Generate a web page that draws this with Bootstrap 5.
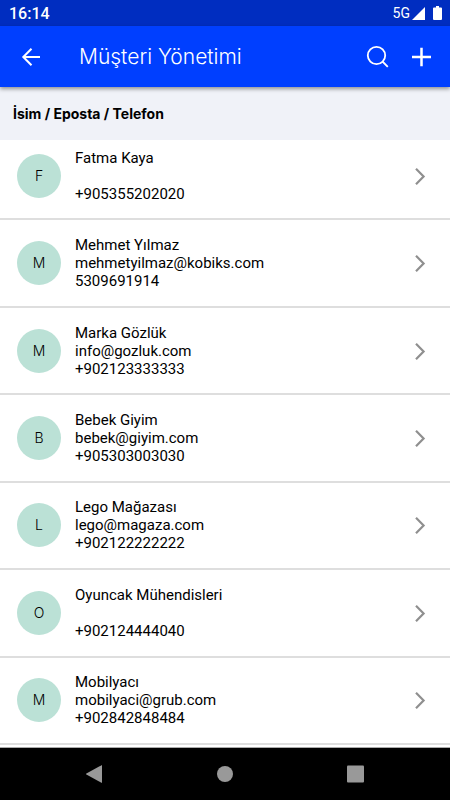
<!DOCTYPE html>
<html lang="tr">
<head>
<meta charset="utf-8">
<meta name="viewport" content="width=device-width, initial-scale=1">
<title>Müşteri Yönetimi</title>
<link rel="stylesheet" href="https://cdn.jsdelivr.net/npm/bootstrap@5.3.0/dist/css/bootstrap.min.css">
<style>
  body { font-family: Roboto, sans-serif; color: #000; }
  svg { display: block; flex: none; }
  .status-bar { background: #002dc0; padding: 0 8px 0 9px; height: 26px; font-size: 16px; line-height: 27px; }
  .status-time { font-weight: 500; }
  .status-network { font-size: 14px; margin-right: 2px; }
  .app-bar { background: #003fff; min-height: 61px; padding: 0 16px; box-shadow: 0 2px 4px rgba(0, 0, 0, .4); z-index: 1; }
  .app-title { font-family: Inter, sans-serif; font-size: 21px; line-height: 28px; font-weight: 300; margin-left: 33px; }
  .app-actions { gap: 20px; }
  .icon-btn { border: 0; padding: 0; background: none; color: #fff; }
  .filter-head { font-family: Inter, sans-serif; background: #f0f2f8; font-size: 14px; line-height: 20px; font-weight: 700; padding: 17px 13px 16px; margin: 0; }
  .customers { margin-bottom: 2px; }
  .customer { flex: 1 0 87px; gap: 14px; padding: 0 18px 0 17px; border-bottom: 2px solid #dedede; color: #000; font-size: 15px; line-height: 18px; }
  .customer:first-child { flex-basis: 80px; padding-bottom: 7px; }
  .avatar { width: 44px; height: 44px; background: #bbe1d6; font-family: Inter, sans-serif; font-size: 14px; font-weight: 300; }
  .details span { display: block; min-height: 18px; }
  .system-nav { background: #000; border-top: 1px solid #aaa; height: 53px; padding: 0 29px; }
</style>
<script src="https://cdn.jsdelivr.net/npm/bootstrap@5.3.0/dist/js/bootstrap.bundle.min.js"></script>
</head>
<body class="d-flex flex-column min-vh-100 bg-white">
  <div class="status-bar d-flex align-items-center justify-content-between text-white">
    <span class="status-time">16:14</span>
    <div class="d-flex align-items-center">
      <span class="status-network">5G</span>
      <svg width="13" height="13" viewBox="0 0 13 13" fill="#fff" aria-hidden="true"><path d="M13 0v13H0z"/></svg>
      <svg class="ms-2" width="9" height="14" viewBox="0 0 9 14" fill="#fff" aria-hidden="true"><path d="M3 0h3v1.500h2q1 0 1 1V13q0 1-1 1H1q-1 0-1-1V2.500q0-1 1-1h2z"/></svg>
    </div>
  </div>

  <header class="app-bar d-flex align-items-center text-white position-relative">
    <button class="icon-btn" type="button" aria-label="Geri">
      <svg width="30" height="30" viewBox="0 0 30 30" fill="none" stroke="currentColor" stroke-width="2"><path d="M24 15H7.500M15.500 6.800 7.300 15l8.200 8.200"/></svg>
    </button>
    <h1 class="app-title mb-0 me-auto">Müşteri Yönetimi</h1>
    <div class="app-actions d-flex">
      <button class="icon-btn" type="button" aria-label="Ara">
        <svg width="24" height="24" viewBox="0 0 24 24" fill="none" stroke="currentColor" stroke-width="1.800"><circle cx="10.500" cy="10.500" r="8.700"/><path d="m16.500 16.500 5.300 5.300"/></svg>
      </button>
      <button class="icon-btn" type="button" aria-label="Ekle">
        <svg width="24" height="24" viewBox="0 0 24 24" fill="none" stroke="currentColor" stroke-width="2.500"><path d="M11.500 2.700v18.500M2 12h19"/></svg>
      </button>
    </div>
  </header>

  <main class="d-flex flex-column flex-grow-1">
    <h2 class="filter-head">İsim / Eposta / Telefon</h2>
    <div class="customers d-flex flex-column flex-grow-1">
      <a href="#" class="customer d-flex align-items-center text-decoration-none">
        <span class="avatar rounded-circle d-flex align-items-center justify-content-center">F</span>
        <span class="details flex-grow-1"><span>Fatma Kaya</span><span></span><span>+905355202020</span></span>
        <svg width="24" height="24" viewBox="0 0 24 24" fill="none" stroke="#8f8f8f" stroke-width="2.200"><path d="m8 4.700 7.600 7.800L8 20.300"/></svg>
      </a>
      <a href="#" class="customer d-flex align-items-center text-decoration-none">
        <span class="avatar rounded-circle d-flex align-items-center justify-content-center">M</span>
        <span class="details flex-grow-1"><span>Mehmet Yılmaz</span><span>mehmetyilmaz@kobiks.com</span><span>5309691914</span></span>
        <svg width="24" height="24" viewBox="0 0 24 24" fill="none" stroke="#8f8f8f" stroke-width="2.200"><path d="m8 4.700 7.600 7.800L8 20.300"/></svg>
      </a>
      <a href="#" class="customer d-flex align-items-center text-decoration-none">
        <span class="avatar rounded-circle d-flex align-items-center justify-content-center">M</span>
        <span class="details flex-grow-1"><span>Marka Gözlük</span><span>info@gozluk.com</span><span>+902123333333</span></span>
        <svg width="24" height="24" viewBox="0 0 24 24" fill="none" stroke="#8f8f8f" stroke-width="2.200"><path d="m8 4.700 7.600 7.800L8 20.300"/></svg>
      </a>
      <a href="#" class="customer d-flex align-items-center text-decoration-none">
        <span class="avatar rounded-circle d-flex align-items-center justify-content-center">B</span>
        <span class="details flex-grow-1"><span>Bebek Giyim</span><span>bebek@giyim.com</span><span>+905303003030</span></span>
        <svg width="24" height="24" viewBox="0 0 24 24" fill="none" stroke="#8f8f8f" stroke-width="2.200"><path d="m8 4.700 7.600 7.800L8 20.300"/></svg>
      </a>
      <a href="#" class="customer d-flex align-items-center text-decoration-none">
        <span class="avatar rounded-circle d-flex align-items-center justify-content-center">L</span>
        <span class="details flex-grow-1"><span>Lego Mağazası</span><span>lego@magaza.com</span><span>+902122222222</span></span>
        <svg width="24" height="24" viewBox="0 0 24 24" fill="none" stroke="#8f8f8f" stroke-width="2.200"><path d="m8 4.700 7.600 7.800L8 20.300"/></svg>
      </a>
      <a href="#" class="customer d-flex align-items-center text-decoration-none">
        <span class="avatar rounded-circle d-flex align-items-center justify-content-center">O</span>
        <span class="details flex-grow-1"><span>Oyuncak Mühendisleri</span><span></span><span>+902124444040</span></span>
        <svg width="24" height="24" viewBox="0 0 24 24" fill="none" stroke="#8f8f8f" stroke-width="2.200"><path d="m8 4.700 7.600 7.800L8 20.300"/></svg>
      </a>
      <a href="#" class="customer d-flex align-items-center text-decoration-none">
        <span class="avatar rounded-circle d-flex align-items-center justify-content-center">M</span>
        <span class="details flex-grow-1"><span>Mobilyacı</span><span>mobilyaci@grub.com</span><span>+902842848484</span></span>
        <svg width="24" height="24" viewBox="0 0 24 24" fill="none" stroke="#8f8f8f" stroke-width="2.200"><path d="m8 4.700 7.600 7.800L8 20.300"/></svg>
      </a>
    </div>
  </main>

  <nav class="system-nav d-flex align-items-center justify-content-around" aria-label="Sistem">
    <button class="icon-btn" type="button" aria-label="Geri">
      <svg width="18" height="18" viewBox="0 0 18 18" fill="#999"><path d="M17 .5v17q0 .5-.6.2L1.400 9.600q-.8-.6 0-1.100L16.400.2q.6-.3.6.3z"/></svg>
    </button>
    <button class="icon-btn" type="button" aria-label="Ana ekran">
      <svg width="18" height="18" viewBox="0 0 18 18" fill="#999"><circle cx="9" cy="9" r="8"/></svg>
    </button>
    <button class="icon-btn" type="button" aria-label="Son uygulamalar">
      <svg width="18" height="18" viewBox="0 0 18 18" fill="#999"><rect x="0" y=".5" width="17" height="17" rx="1"/></svg>
    </button>
  </nav>
</body>
</html>
